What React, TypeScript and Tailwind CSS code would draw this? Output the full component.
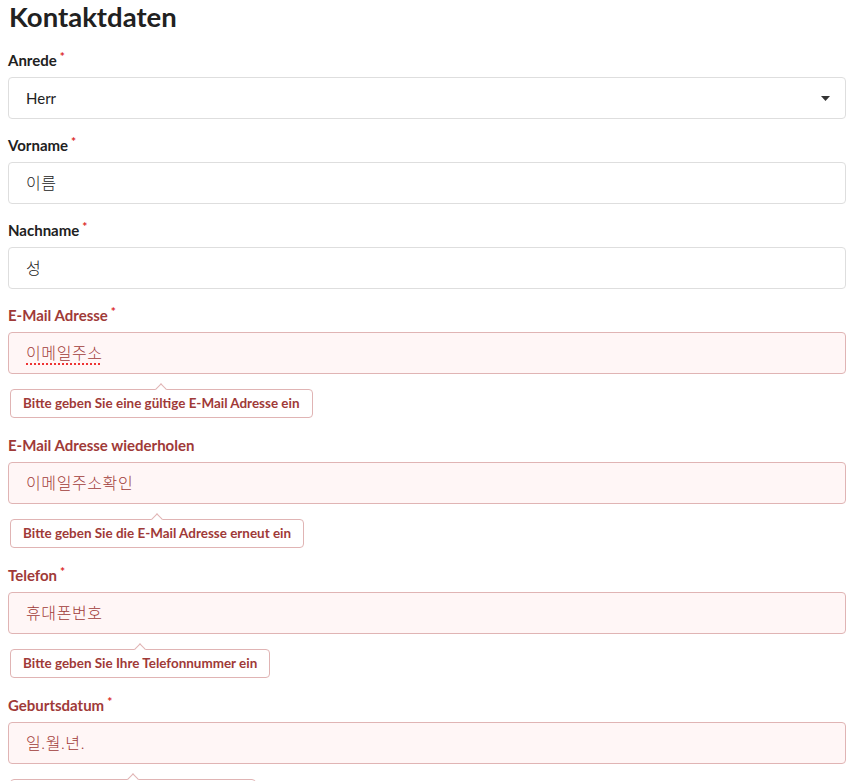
import React from 'react'

type Field = {
  label: string
  value: string
  required?: boolean
  error?: string
  select?: boolean
  spell?: boolean
}

const FIELDS: Field[] = [
  { label: 'Anrede', value: 'Herr', required: true, select: true },
  { label: 'Vorname', value: '이름', required: true },
  { label: 'Nachname', value: '성', required: true },
  { label: 'E-Mail Adresse', value: '이메일주소', required: true, spell: true, error: 'Bitte geben Sie eine gültige E-Mail Adresse ein' },
  { label: 'E-Mail Adresse wiederholen', value: '이메일주소확인', error: 'Bitte geben Sie die E-Mail Adresse erneut ein' },
  { label: 'Telefon', value: '휴대폰번호', required: true, error: 'Bitte geben Sie Ihre Telefonnummer ein' },
  { label: 'Geburtsdatum', value: '일.월.년.', required: true, error: 'Bitte geben Sie Ihr Geburtsdatum ein' },
]

function FormField({ f }: { f: Field }) {
  const err = !!f.error
  // latin values (the select) keep the base size, hangul values run a bit larger
  const korean = !f.select
  return (
    <div className={err ? 'mb-[18px]' : 'mb-[17px]'}>
      <label className={`block text-[15px] leading-[18px] font-bold mb-2 ${err ? 'text-[#9f3a38]' : 'text-[#212121]'}`}>
        {f.label}
        {f.required && <span className="ml-[3px] align-top text-[12px] leading-[12px] text-[#db2828]">*</span>}
      </label>
      <div
        className={`h-[42px] flex items-center justify-between rounded-[4px] border px-[17px] ${
          err ? 'bg-[#fff6f6] border-[#e0b4b4] text-[#9f3a38]' : 'bg-white border-[#dedede] text-[#212121]'
        }`}
      >
        <span
          className={`${korean ? 'text-[16px] tracking-[0.6px] font-light' : 'text-[15px]'} ${
            f.spell ? 'underline decoration-dotted decoration-[#e33] decoration-2 underline-offset-[4px]' : ''
          }`}
        >
          {f.value}
        </span>
        {f.select && (
          <svg width="9" height="5" viewBox="0 0 9 5" className="mr-[-2px]">
            <path d="M0 0h9L4.5 5z" fill="#333" />
          </svg>
        )}
      </div>
      {err && (
        <div className="mt-[15px] ml-[2px] flex">
          <div className="relative bg-white border border-[#e0b4b4] rounded-[4px] h-[29px] px-[12px] flex items-center text-[13.45px] font-bold text-[#9f3a38]">
            <span className="absolute left-1/2 -top-[1px] w-[8px] h-[8px] -translate-x-1/2 -translate-y-1/2 rotate-45 bg-white border-t border-l border-[#e0b4b4]" />
            {f.error}
          </div>
        </div>
      )}
    </div>
  )
}

export default function App() {
  return (
    <div className="h-[781px] overflow-hidden bg-white pl-2 pr-[9px] font-['Lato','Noto_Sans_CJK_KR',sans-serif]">
      <h1 className="text-[27.5px] leading-[34px] font-bold text-[#212121] mb-[17px] pl-px">Kontaktdaten</h1>
      {FIELDS.map((f) => (
        <FormField key={f.label} f={f} />
      ))}
    </div>
  )
}
